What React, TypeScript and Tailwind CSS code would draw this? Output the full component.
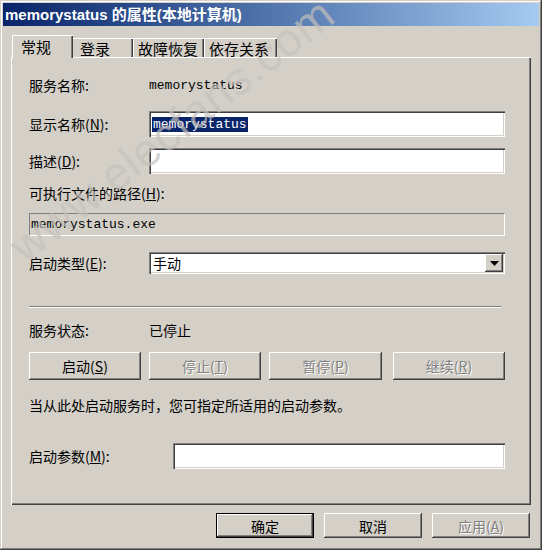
import React from "react";

const raised =
  "shadow-[inset_-1px_-1px_#404040,inset_1px_1px_#ffffff,inset_-2px_-2px_#808080,inset_2px_2px_#d4d0c8]";
const sunken =
  "shadow-[inset_1px_1px_#808080,inset_2px_2px_#404040,inset_-1px_-1px_#ffffff,inset_-2px_-2px_#d4d0c8]";

function Btn({
  children,
  disabled,
  w,
}: {
  children: React.ReactNode;
  disabled?: boolean;
  w: string;
}) {
  return (
    <div
      className={`${w} h-[28px] flex items-center justify-center bg-[#d4d0c8] ${raised} text-[14px] ${
        disabled ? "text-[#808080] [text-shadow:1px_1px_0_#ffffff]" : "text-black"
      }`}
    >
      {children}
    </div>
  );
}

export default function App() {
  const cjk = "font-['Noto_Sans_CJK_SC','Liberation_Sans',sans-serif]";
  const mono = "font-['Liberation_Mono','DejaVu_Sans_Mono',monospace] text-[13px]";
  return (
    <div
      className={`relative w-[542px] h-[550px] bg-[#d4d0c8] overflow-hidden p-[3px] ${cjk} text-black shadow-[inset_-1px_-1px_#404040,inset_1px_1px_#d4d0c8,inset_-2px_-2px_#808080,inset_2px_2px_#ffffff]`}
    >
      {/* Title bar */}
      <div className="h-[23px] bg-gradient-to-r from-[#0a246a] to-[#a6caf0] flex items-center pl-[2px]">
        <span className="text-white font-bold text-[15px] leading-none font-['Liberation_Sans','Noto_Sans_CJK_SC',sans-serif]">
          memorystatus 的属性(本地计算机)
        </span>
      </div>

      <div className="pl-[8px] pt-[9px]">
        {/* Tabs */}
        <div className="flex items-end h-[22px] text-[15px] leading-none relative z-10">
          <div className="ml-[1px] w-[61px] h-[23px] -mb-[1px] bg-[#d4d0c8] border-t border-l border-white shadow-[inset_-1px_0_#404040,inset_-2px_0_#808080] rounded-tl-[2px] flex items-start pt-[3px] pl-[8px]">
            常规
          </div>
          <div className="w-[60px] h-[19px] border-t border-white shadow-[inset_-1px_0_#404040,inset_-2px_0_#808080] flex items-center pl-[7px]">
            登录
          </div>
          <div className="w-[71px] h-[19px] border-t border-l border-white shadow-[inset_-1px_0_#404040,inset_-2px_0_#808080] flex items-center pl-[4px]">
            故障恢复
          </div>
          <div className="w-[73px] h-[19px] border-t border-l border-white shadow-[inset_-1px_0_#404040,inset_-2px_0_#808080] flex items-center pl-[4px]">
            依存关系
          </div>
        </div>

        {/* Panel */}
        <div className="w-[520px] h-[448px] bg-[#d4d0c8] border-t border-l border-white shadow-[inset_-1px_-1px_#404040,inset_-2px_-2px_#808080] pl-[17px] pr-[26px] flex flex-col text-[14px] leading-none">
          <div className="mt-[17px] h-[20px] flex items-center">
            <span className="w-[120px]">服务名称:</span>
            <span className={mono}>memorystatus</span>
          </div>

          <div className="mt-[16px] h-[26px] flex items-center">
            <span className="w-[120px]">
              显示名称(<u>N</u>):
            </span>
            <div className={`flex-1 h-[26px] bg-white ${sunken} flex items-center pl-[3px]`}>
              <span className={`${mono} bg-[#0a246a] text-white px-[1px] leading-[15px]`}>memorystatus</span>
            </div>
          </div>

          <div className="mt-[11px] h-[26px] flex items-center">
            <span className="w-[120px]">
              描述(<u>D</u>):
            </span>
            <div className={`flex-1 h-[26px] bg-white ${sunken}`} />
          </div>

          <div className="mt-[9px] h-[20px] flex items-center">
            可执行文件的路径(<u>H</u>):
          </div>

          <div className="mt-[10px] h-[23px] border border-t-[#808080] border-l-[#808080] border-b-white border-r-white flex items-center pl-[1px]">
            <span className={mono}>memorystatus.exe</span>
          </div>

          <div className="mt-[16px] h-[22px] flex items-center">
            <span className="w-[120px]">
              启动类型(<u>E</u>):
            </span>
            <div className={`flex-1 h-[22px] bg-white ${sunken} flex items-center p-[2px]`}>
              <span className="flex-1 pl-[2px]">手动</span>
              <div className={`w-[18px] h-[18px] bg-[#d4d0c8] ${raised} flex items-center justify-center`}>
                <svg width="9" height="5" viewBox="0 0 9 5">
                  <path d="M0 0h9L4.5 5z" fill="#000" />
                </svg>
              </div>
            </div>
          </div>

          <div className="mt-[32px] mr-[4px] h-[2px] border-t border-[#808080] border-b border-b-white" />

          <div className="mt-[12px] h-[20px] flex items-center">
            <span className="w-[120px]">服务状态:</span>
            <span>已停止</span>
          </div>

          <div className="mt-[12px] flex gap-[8px]">
            <Btn w="w-[112px]">
              启动(<u>S</u>)
            </Btn>
            <Btn w="w-[112px]" disabled>
              停止(<u>T</u>)
            </Btn>
            <Btn w="w-[113px]" disabled>
              暂停(<u>P</u>)
            </Btn>
            <div className="flex-1 ml-[3px] flex">
              <Btn w="w-full" disabled>
                继续(<u>R</u>)
              </Btn>
            </div>
          </div>

          <div className="mt-[15px] h-[20px] flex items-center">
            当从此处启动服务时，您可指定所适用的启动参数。
          </div>

          <div className="mt-[28px] h-[26px] flex items-center">
            <span className="w-[144px]">
              启动参数(<u>M</u>):
            </span>
            <div className={`flex-1 h-[26px] bg-white ${sunken}`} />
          </div>
        </div>

        {/* Bottom buttons */}
        <div className="w-[519px] mt-[8px] flex justify-end gap-[10px] text-[14px] leading-none">
          <div className={`w-[98px] h-[25px] border border-black flex items-center justify-center ${raised}`}>
            确定
          </div>
          <div className={`w-[98px] h-[25px] flex items-center justify-center ${raised}`}>取消</div>
          <div
            className={`w-[98px] h-[25px] flex items-center justify-center ${raised} text-[#808080] [text-shadow:1px_1px_0_#ffffff]`}
          >
            应用(<u>A</u>)
          </div>
        </div>
      </div>

      {/* Watermark */}
      <div className="pointer-events-none absolute left-[172px] top-[130px] -translate-x-1/2 -translate-y-1/2 -rotate-[38deg] whitespace-nowrap text-[46px] font-['Liberation_Sans',sans-serif] text-[#c4c1bb]/70 tracking-[1px]">
        www.elecfans.com
      </div>
    </div>
  );
}
